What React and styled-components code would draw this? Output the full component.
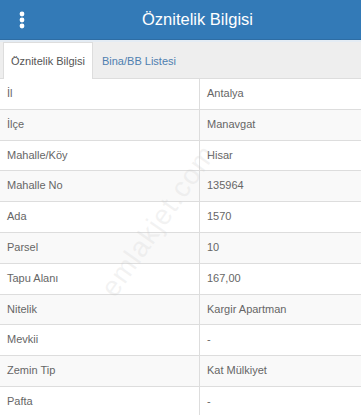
import React from 'react'
import styled, {createGlobalStyle} from 'styled-components';

const GlobalStyle = createGlobalStyle`
  body {
    margin: 0;
    background: #fff;
    font-family: "Liberation Sans", Arial, sans-serif;
  }
`;

const Page = styled.div`
  position: relative;
  width: 361px;
  height: 415px;
  overflow: hidden;
`;

const Header = styled.div`
  height: 39px;
  background-color: #337ab7;
  display: flex;
  align-items: center;
  border-bottom: 1px solid #2e6da4;
`;

const MenuButton = styled.div`
  width: 40px;
  display: flex;
  justify-content: center;
  padding-left: 2px;
`;

const Title = styled.h1`
  margin: 0;
  flex: 1;
  font-size: 16.5px;
  font-weight: 400;
  color: #fff;
  text-align: center;
  padding-left: 52px;
  padding-right: 60px;
`;

const TabBar = styled.div`
  display: flex;
  align-items: flex-end;
  height: 36px;
  padding: 0 3px;
  background-color: #eeeeee;
  border-top: 2px solid #e4ecf4;
  border-bottom: 1px solid #dddddd;
`;

const Tab = styled.div`
  height: ${props => props.active ? '36px' : '35px'};
  margin-bottom: ${props => props.active ? '-1px' : '0'};
  display: flex;
  align-items: center;
  padding: 0 7px;
  font-size: 11px;
  color: ${props => props.active ? '#555' : '#4f7fb0'};
  background-color: ${props => props.active ? '#fff' : 'transparent'};
  border: 1px solid ${props => props.active ? '#dddddd' : 'transparent'};
  border-bottom: none;
  margin-right: 1px;
`;

const Table = styled.table`
  width: 100%;
  border-collapse: collapse;
  table-layout: fixed;
`;

const Row = styled.tr`
  background-color: ${props => props.striped ? '#f9f9f9' : '#fff'};
`;

const Cell = styled.td`
  width: ${props => props.first ? '185px' : 'auto'};
  height: 19.8px;
  padding: 5px 7px;
  line-height: 19.8px;
  font-size: 11px;
  color: #666;
  border-top: ${props => props.top ? 'none' : '1px solid #dddddd'};
  border-right: ${props => props.first ? '1px solid #dddddd' : 'none'};
  vertical-align: middle;
`;

const Watermark = styled.div`
  position: absolute;
  left: 70px;
  top: 205px;
  transform: rotate(-55deg);
  font-size: 28px;
  color: rgba(200, 200, 200, 0.22);
  letter-spacing: 1px;
  pointer-events: none;
`;

const KebabIcon = () => (
    <svg width="6" height="18" viewBox="0 0 6 18">
        <circle cx="3" cy="3" r="2.4" fill="#fff"/>
        <circle cx="3" cy="9" r="2.4" fill="#fff"/>
        <circle cx="3" cy="15" r="2.4" fill="#fff"/>
    </svg>
);

const rows = [
    ['İl', 'Antalya'],
    ['İlçe', 'Manavgat'],
    ['Mahalle/Köy', 'Hisar'],
    ['Mahalle No', '135964'],
    ['Ada', '1570'],
    ['Parsel', '10'],
    ['Tapu Alanı', '167,00'],
    ['Nitelik', 'Kargir Apartman'],
    ['Mevkii', '-'],
    ['Zemin Tip', 'Kat Mülkiyet'],
    ['Pafta', '-'],
];

const App = () => {
    return (
        <Page>
            <GlobalStyle/>
            <Header>
                <MenuButton><KebabIcon/></MenuButton>
                <Title>Öznitelik Bilgisi</Title>
            </Header>
            <TabBar>
                <Tab active>Öznitelik Bilgisi</Tab>
                <Tab>Bina/BB Listesi</Tab>
            </TabBar>
            <Table>
                <tbody>
                {
                    rows.map((row, index) => (
                        <Row key={index} striped={index % 2 === 1}>
                            <Cell first top={index === 0}>{row[0]}</Cell>
                            <Cell top={index === 0}>{row[1]}</Cell>
                        </Row>
                    ))
                }
                </tbody>
            </Table>
            <Watermark>emlakjet.com</Watermark>
        </Page>
    )
};

export default App;
